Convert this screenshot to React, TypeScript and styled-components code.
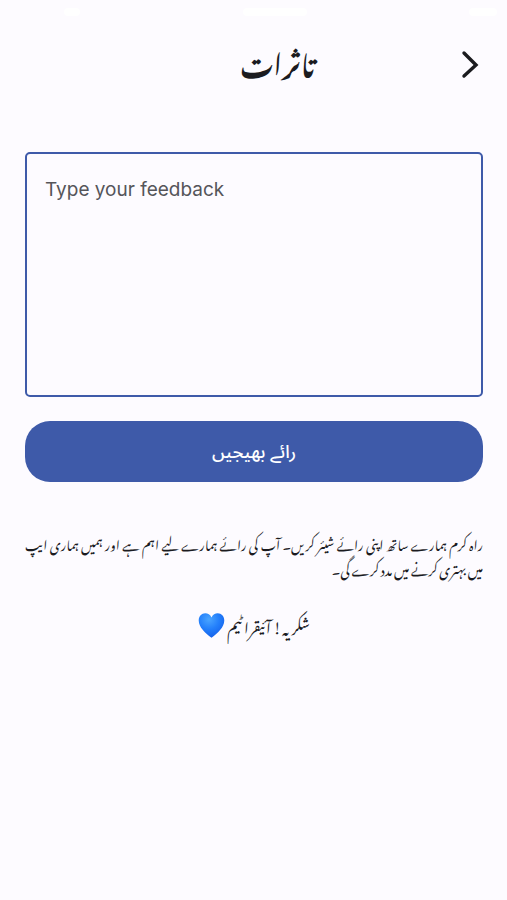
import React, { useState } from "react";
import styled, { createGlobalStyle } from "styled-components";

const GlobalStyle = createGlobalStyle`
  * { box-sizing: border-box; }
  body {
    margin: 0;
    background: #fdfbff;
    color: #1b1b1f;
    font-family: "Noto Nastaliq Urdu", "DejaVu Sans", sans-serif;
  }
`;

const Screen = styled.div`
  min-height: 100vh;
  background: #fdfbff;
`;

const StatusBar = styled.div`
  display: flex;
  justify-content: space-between;
  align-items: center;
  height: 24px;
  padding: 0 10px 0 64px;
`;

const StatusMark = styled.span<{ $width: number }>`
  width: ${(p) => p.$width}px;
  height: 8px;
  border-radius: 4px;
  background: #ffffff;
`;

const Header = styled.header`
  display: grid;
  grid-template-columns: 48px 1fr 48px;
  align-items: center;
  height: 80px;
  padding: 0 13px;
`;

const Title = styled.h1`
  grid-column: 2;
  margin: 0;
  padding: 0 0 6px 48px;
  font-size: 27px;
  line-height: 48px;
  font-weight: 700;
  text-align: center;
`;

const BackButton = styled.button`
  display: grid;
  place-items: center;
  width: 48px;
  height: 48px;
  padding: 0;
  border: 0;
  background: transparent;
  color: #1b1b1f;
  cursor: pointer;
`;

const Form = styled.form`
  display: flex;
  flex-direction: column;
  gap: 24px;
  padding: 48px 24px 0 25px;
`;

const FeedbackInput = styled.textarea`
  display: block;
  width: 100%;
  height: 245px;
  padding: 22px 18px;
  border: 2px solid #3e5aa9;
  border-radius: 5px;
  outline: 0;
  resize: none;
  background: transparent;
  color: #1b1b1f;
  font-family: Inter, sans-serif;
  font-size: 19px;
  line-height: 28px;
  &::placeholder {
    color: #55555a;
    opacity: 1;
  }
`;

const SubmitButton = styled.button`
  height: 61px;
  border: 0;
  border-radius: 25px;
  background: #3e5aa9;
  color: #ffffff;
  font-family: "Noto Sans Arabic", "DejaVu Sans", sans-serif;
  font-size: 18px;
  line-height: 24px;
  font-weight: 500;
  cursor: pointer;
`;

const Message = styled.section`
  padding: 48px 24px 0 25px;
`;

const Note = styled.p`
  margin: 0;
  font-size: 13px;
  line-height: 25px;
  text-align: justify;
`;

const Thanks = styled.p`
  display: flex;
  justify-content: center;
  align-items: center;
  gap: 2px;
  margin: 31px 0 0;
  font-size: 15px;
  line-height: 28px;
`;

const Heart = () => (
  <svg width="27" height="27" viewBox="0 0 26 26" role="img" aria-label="💙">
    <defs>
      <radialGradient id="heart" cx="0.4" cy="0.25" r="0.8">
        <stop offset="0" stopColor="#4aa5ff" />
        <stop offset="0.5" stopColor="#237ffb" />
        <stop offset="1" stopColor="#145de8" />
      </radialGradient>
    </defs>
    <path
      d="M13 5.2C11.7 2.8 9.5 1.3 7 1.3c-3.5 0-6.3 2.8-6.3 6.8 0 6.5 6.1 12 12.3 16.6 6.2-4.6 12.3-10.1 12.3-16.6 0-4-2.8-6.8-6.3-6.8-2.5 0-4.7 1.5-6 3.9Z"
      fill="url(#heart)"
    />
  </svg>
);

export default function App() {
  const [feedback, setFeedback] = useState("");
  return (
    <Screen>
      <GlobalStyle />
      <StatusBar aria-hidden="true">
        <StatusMark $width={16} />
        <StatusMark $width={64} />
        <StatusMark $width={28} />
      </StatusBar>
      <Header>
        <Title lang="ur" dir="rtl">تاثرات</Title>
        <BackButton type="button" aria-label="واپس">
          <svg width="28" height="32" viewBox="0 0 28 32" fill="none" aria-hidden="true">
            <path d="M8 5 20 17 8 28" stroke="currentColor" strokeWidth="3.4" strokeLinecap="round" strokeLinejoin="miter" />
          </svg>
        </BackButton>
      </Header>
      <Form onSubmit={(e) => e.preventDefault()}>
        <FeedbackInput
          aria-label="Type your feedback"
          placeholder="Type your feedback"
          value={feedback}
          onChange={(e) => setFeedback(e.target.value)}
        />
        <SubmitButton type="submit" lang="ur" dir="rtl">رائے بھیجیں</SubmitButton>
      </Form>
      <Message lang="ur" dir="rtl">
        <Note>
          راہ کرم ہمارے ساتھ اپنی رائے شیئر کریں۔ آپ کی رائے ہمارے لیے اہم ہے اور ہمیں ہماری ایپ میں بہتری کرنے میں مدد کرے گی۔
        </Note>
        <Thanks>
          <span>شکریہ! آئیقرا ٹیم</span>
          <Heart />
        </Thanks>
      </Message>
    </Screen>
  );
}
